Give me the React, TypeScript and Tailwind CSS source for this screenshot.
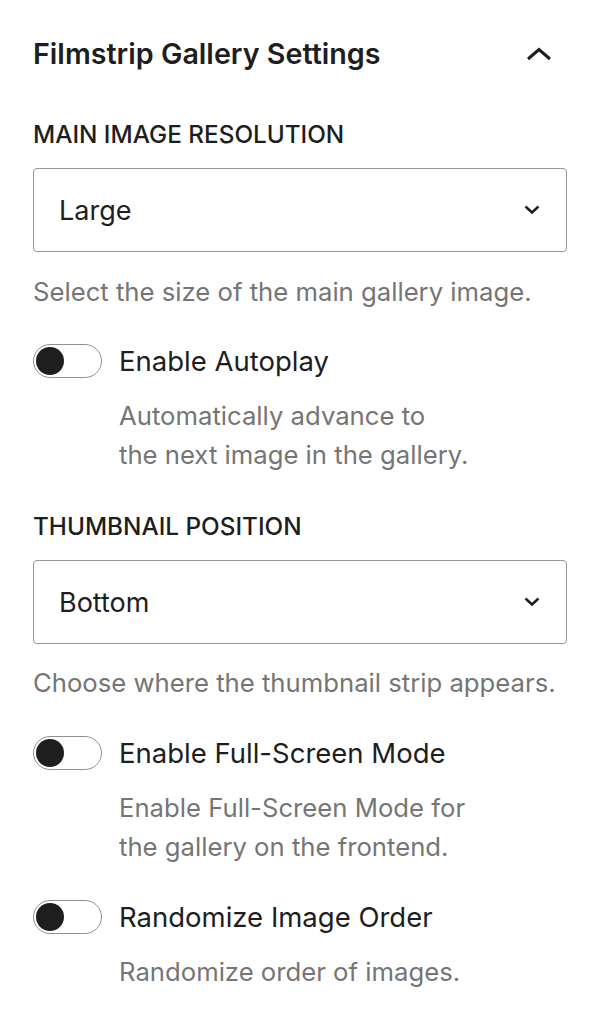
import React from "react";

function ChevronUp() {
  return (
    <svg width="26" height="14" viewBox="0 0 26 14" fill="none" aria-hidden className="mr-[15px]">
      <polyline points="2,12 13,2.5 24,12" stroke="#1e1e1e" strokeWidth="3" />
    </svg>
  );
}

function ChevronDown() {
  return (
    <svg width="16" height="10" viewBox="0 0 16 10" fill="none" aria-hidden>
      <polyline points="1.5,1.5 8,7.5 14.5,1.5" stroke="#1e1e1e" strokeWidth="2.4" />
    </svg>
  );
}

function Select({ value }: { value: string }) {
  return (
    <div className="flex h-[84px] items-center justify-between rounded-[4px] border-[1.5px] border-[#949494] pl-[25px] pr-[26px]">
      <span className="text-[27px] leading-none">{value}</span>
      <ChevronDown />
    </div>
  );
}

function Toggle({ label, help, className }: { label: string; help: string[]; className: string }) {
  return (
    <div className={className}>
      <div className="flex items-center gap-[17px]">
        <span className="flex h-[34px] w-[69px] shrink-0 items-center rounded-full border-[1.5px] border-[#8f8f8f] pl-[2px]">
          <span className="h-[28px] w-[28px] rounded-full bg-[#1e1e1e]" />
        </span>
        <span className="text-[27.5px] leading-[34px]">{label}</span>
      </div>
      <div className="mt-[18px] pl-[86px] text-[25.7px] leading-[39px] text-[#757575]">
        {help.map((line) => (
          <div key={line}>{line}</div>
        ))}
      </div>
    </div>
  );
}

export default function App() {
  return (
    <div className="min-h-screen bg-white px-[33px] pt-[34px] font-['Inter',sans-serif] text-[#1e1e1e]">
      <div className="flex h-[40px] items-center justify-between">
        <h2 className="text-[28.7px] font-semibold leading-[40px]">Filmstrip Gallery Settings</h2>
        <ChevronUp />
      </div>

      <div className="mt-[48px] text-[24.3px] font-medium leading-[24px]">MAIN IMAGE RESOLUTION</div>
      <div className="mt-[22px]">
        <Select value="Large" />
      </div>
      <p className="mt-[25px] text-[25.7px] leading-[30px] text-[#757575]">
        Select the size of the main gallery image.
      </p>

      <Toggle
        className="mt-[37px]"
        label="Enable Autoplay"
        help={["Automatically advance to", "the next image in the gallery."]}
      />

      <div className="mt-[40px] text-[24.3px] font-medium leading-[24px]">THUMBNAIL POSITION</div>
      <div className="mt-[22px]">
        <Select value="Bottom" />
      </div>
      <p className="mt-[24px] text-[25.7px] leading-[30px] text-[#757575]">
        Choose where the thumbnail strip appears.
      </p>

      <Toggle
        className="mt-[38px]"
        label="Enable Full-Screen Mode"
        help={["Enable Full-Screen Mode for", "the gallery on the frontend."]}
      />

      <Toggle
        className="mt-[34px]"
        label="Randomize Image Order"
        help={["Randomize order of images."]}
      />
    </div>
  );
}
